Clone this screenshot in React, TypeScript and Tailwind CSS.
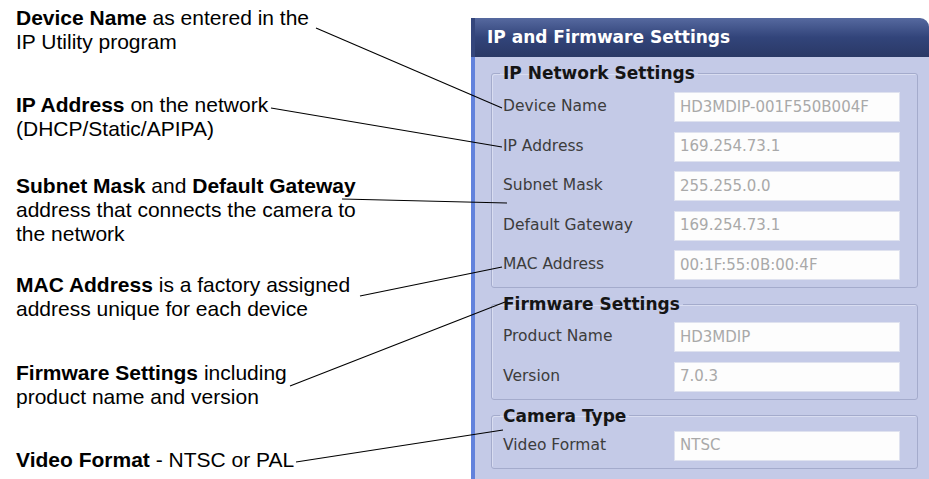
import React from 'react';

const Row = ({ label, value }: { label: string; value: string }) => (
  <div className="flex items-center h-[30px]">
    <span className="w-[171px] text-[15.5px] text-[#3c3c3c]">{label}</span>
    <div className="w-[226px] h-[30px] bg-[#fdfdfd] border border-[#dfe2ef] flex items-center pl-[5px] text-[15px] text-[#a9a9a9] whitespace-nowrap overflow-hidden">
      {value}
    </div>
  </div>
);

const Group = ({
  title,
  className,
  children,
}: {
  title: string;
  className: string;
  children: React.ReactNode;
}) => (
  <fieldset
    className={`w-[427px] border border-[#a4abcc] rounded-[3px] pl-[11px] pr-[17px] pb-[7px] shadow-[inset_1px_1px_0_#d9ddf1] ${className}`}
  >
    <legend className="-ml-[3px] px-[3px] leading-[18px] text-[17px] font-bold text-[#151515]">
      {title}
    </legend>
    <div className="flex flex-col gap-[9.5px]">{children}</div>
  </fieldset>
);

export default function App() {
  return (
    <div className="relative w-[929px] h-[479px] bg-white overflow-hidden flex">
      {/* callout text */}
      <div className="w-[471px] shrink-0 pl-[16px] pt-[6px] text-[21px] leading-[24px] text-black font-['Liberation_Sans',Arial,sans-serif]">
        <p>
          <b>Device Name</b> as entered in the
          <br />
          IP Utility program
        </p>
        <p className="mt-[39px]">
          <b>IP Address</b> on the network
          <br />
          (DHCP/Static/APIPA)
        </p>
        <p className="mt-[33px]">
          <b>Subnet Mask</b> and <b>Default Gateway</b>
          <br />
          address that connects the camera to
          <br />
          the network
        </p>
        <p className="mt-[27px]">
          <b>MAC Address</b> is a factory assigned
          <br />
          address unique for each device
        </p>
        <p className="mt-[40px]">
          <b>Firmware Settings</b> including
          <br />
          product name and version
        </p>
        <p className="mt-[39px]">
          <b>Video Format</b> - NTSC or PAL
        </p>
      </div>

      {/* settings window */}
      <div className="mt-[18px] w-[458px] shrink-0 flex flex-col font-['DejaVu_Sans',Verdana,sans-serif]">
        <div className="h-[39px] rounded-tr-[9px] border-l-[4px] border-[#34467c] bg-gradient-to-b from-[#56699f] via-[#32447a] to-[#2a3966] flex items-center pl-[12px] text-[17px] font-bold text-white">
          IP and Firmware Settings
        </div>
        <div className="flex-1 border-l-[4px] border-[#6282dc] bg-[#c4cae7] pl-[16px]">
          <Group title="IP Network Settings" className="mt-[7px] pt-[10px]">
            <Row label="Device Name" value="HD3MDIP-001F550B004F" />
            <Row label="IP Address" value="169.254.73.1" />
            <Row label="Subnet Mask" value="255.255.0.0" />
            <Row label="Default Gateway" value="169.254.73.1" />
            <Row label="MAC Address" value="00:1F:55:0B:00:4F" />
          </Group>
          <Group title="Firmware Settings" className="mt-[7px] pt-[9px]">
            <Row label="Product Name" value="HD3MDIP" />
            <Row label="Version" value="7.0.3" />
          </Group>
          <Group title="Camera Type" className="mt-[7px] pt-[6px]">
            <Row label="Video Format" value="NTSC" />
          </Group>
        </div>
      </div>

      {/* leader lines */}
      <svg
        className="absolute inset-0 pointer-events-none"
        width="929"
        height="479"
        viewBox="0 0 929 479"
      >
        <g stroke="#000" strokeWidth="1.1" fill="none">
          <line x1="316" y1="28" x2="502" y2="108" />
          <line x1="271" y1="108" x2="502" y2="147" />
          <line x1="342" y1="199" x2="507" y2="203" />
          <line x1="360" y1="296" x2="502" y2="267" />
          <line x1="290" y1="386" x2="505" y2="302" />
          <line x1="296" y1="462" x2="503" y2="430" />
        </g>
      </svg>
    </div>
  );
}
